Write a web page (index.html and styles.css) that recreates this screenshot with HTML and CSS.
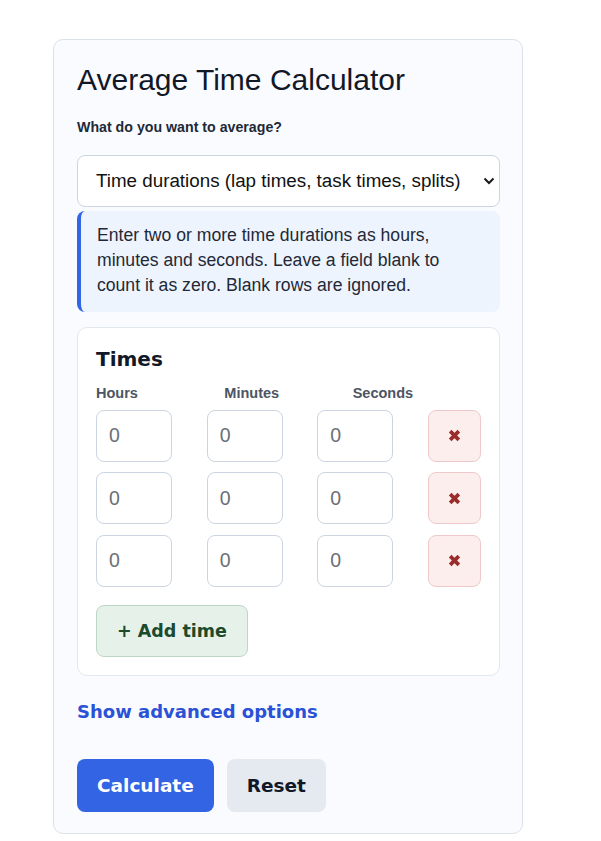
FILE: index.html
```html
<!DOCTYPE html>
<html lang="en">
<head>
    <meta charset="UTF-8">
    <meta name="viewport" content="width=device-width, initial-scale=1.0">
    <title>Average Time Calculator</title>
    <link rel="stylesheet" href="styles.css">
</head>
<body>
    <div class="page">
        <div class="calc">
            <h1>Average Time Calculator</h1>

            <label class="field-label" for="mode">What do you want to average?</label>
            <div class="select-wrap">
                <select id="mode">
                    <option>Time durations (lap times, task times, splits)</option>
                    <option>Clock times (times of day)</option>
                </select>
                <svg class="chevron" width="12" height="8" viewBox="0 0 12 8"><path d="M1.5 1.5 L6 6 L10.5 1.5" fill="none" stroke="#1a1a1a" stroke-width="2"/></svg>
            </div>

            <div class="info">
                Enter two or more time durations as hours, minutes and seconds. Leave a field blank to count it as zero. Blank rows are ignored.
            </div>

            <div class="times">
                <h2>Times</h2>
                <div class="col-labels">
                    <span>Hours</span>
                    <span>Minutes</span>
                    <span>Seconds</span>
                </div>
                <div class="rows" id="rows">
                    <div class="row">
                        <input type="number" placeholder="0">
                        <input type="number" placeholder="0">
                        <input type="number" placeholder="0">
                        <button type="button" class="remove" aria-label="Remove"><svg width="13" height="13" viewBox="0 0 12 12"><path d="M2 2 L10 10 M10 2 L2 10" stroke="#9b2c2c" stroke-width="3.4"/></svg></button>
                    </div>
                    <div class="row">
                        <input type="number" placeholder="0">
                        <input type="number" placeholder="0">
                        <input type="number" placeholder="0">
                        <button type="button" class="remove" aria-label="Remove"><svg width="13" height="13" viewBox="0 0 12 12"><path d="M2 2 L10 10 M10 2 L2 10" stroke="#9b2c2c" stroke-width="3.4"/></svg></button>
                    </div>
                    <div class="row">
                        <input type="number" placeholder="0">
                        <input type="number" placeholder="0">
                        <input type="number" placeholder="0">
                        <button type="button" class="remove" aria-label="Remove"><svg width="13" height="13" viewBox="0 0 12 12"><path d="M2 2 L10 10 M10 2 L2 10" stroke="#9b2c2c" stroke-width="3.4"/></svg></button>
                    </div>
                </div>
                <button type="button" class="add">+ Add time</button>
            </div>

            <button type="button" class="advanced">Show advanced options</button>

            <div class="actions">
                <button type="button" class="calculate">Calculate</button>
                <button type="button" class="reset">Reset</button>
            </div>
        </div>
    </div>
</body>
</html>
```

FILE: styles.css
```css
body {
    margin: 0;
    background: #ffffff;
    font-family: "Liberation Sans", Arial, sans-serif;
    color: #111827;
}
.page {
    padding: 39px 0 0 53px;
}
.calc {
    box-sizing: border-box;
    width: 470px;
    background: #f9fbff;
    border: 1px solid #dbe1ea;
    border-radius: 10px;
    padding: 22px 22px 21px 23px;
}
h1 {
    margin: 0;
    font-size: 30px;
    line-height: 36px;
    font-weight: 400;
    color: #111827;
}
.field-label {
    display: block;
    margin-top: 20px;
    font-size: 14.2px;
    line-height: 19.6px;
    font-weight: bold;
    color: #1f2937;
}
.select-wrap {
    position: relative;
    margin-top: 17px;
}
select {
    -webkit-appearance: none;
    appearance: none;
    box-sizing: border-box;
    width: 100%;
    height: 52px;
    padding: 0 24px 0 18px;
    border: 1px solid #cbd5e1;
    border-radius: 8px;
    background: #ffffff;
    font-family: "Liberation Sans", Arial, sans-serif;
    font-size: 18.8px;
    color: #111111;
}
.chevron {
    position: absolute;
    right: 5px;
    top: 22px;
    pointer-events: none;
}
.info {
    margin-top: 4px;
    background: #eef4fe;
    border-left: 4px solid #3366e6;
    border-radius: 8px;
    padding: 12px 16px 14px 16px;
    font-size: 17.6px;
    line-height: 25px;
    color: #1f2937;
}
.times {
    margin-top: 15px;
    background: #ffffff;
    border: 1px solid #e2e8f0;
    border-radius: 10px;
    padding: 20px 18px 18px 18px;
}
h2 {
    margin: 0;
    font-family: "DejaVu Sans", sans-serif;
    font-size: 20px;
    line-height: 23px;
    font-weight: bold;
    color: #111827;
}
.col-labels {
    display: grid;
    grid-template-columns: repeat(3, 1fr);
    margin-top: 13px;
    font-size: 14.5px;
    line-height: 18px;
    font-weight: bold;
    color: #4b5563;
}
.rows {
    display: flex;
    flex-direction: column;
    gap: 10.5px;
    margin-top: 8px;
}
.row {
    display: grid;
    grid-template-columns: repeat(3, 76px) 53px;
    justify-content: space-between;
    height: 52px;
}
.row input {
    box-sizing: border-box;
    width: 100%;
    height: 52px;
    padding: 0 10px 0 12px;
    border: 1px solid #cbd5e1;
    border-radius: 8px;
    background: #ffffff;
    font-family: "Liberation Sans", Arial, sans-serif;
    font-size: 19.5px;
    color: #111827;
    -moz-appearance: textfield;
}
.row input::-webkit-outer-spin-button,
.row input::-webkit-inner-spin-button {
    -webkit-appearance: none;
    margin: 0;
}
.row input::placeholder {
    color: #6b6f76;
}
.remove {
    display: flex;
    align-items: center;
    justify-content: center;
    height: 52px;
    padding: 0;
    background: #fdeeee;
    border: 1px solid #efc9c9;
    border-radius: 8px;
    cursor: pointer;
}
.add {
    margin-top: 18px;
    height: 52px;
    padding: 0 20px;
    background: #e6f1ea;
    border: 1px solid #bcd8c4;
    border-radius: 8px;
    font-family: "DejaVu Sans", sans-serif;
    font-size: 17.5px;
    font-weight: bold;
    color: #1c4a2c;
    cursor: pointer;
}
.advanced {
    display: block;
    margin-top: 25px;
    padding: 0;
    background: none;
    border: none;
    font-family: "DejaVu Sans", sans-serif;
    font-size: 18px;
    line-height: 21px;
    font-weight: bold;
    color: #2b52d6;
    cursor: pointer;
}
.actions {
    display: flex;
    gap: 13px;
    margin-top: 37px;
}
.actions button {
    height: 53px;
    padding: 0 20px;
    border: none;
    border-radius: 8px;
    font-family: "DejaVu Sans", sans-serif;
    font-size: 18.5px;
    font-weight: bold;
    cursor: pointer;
}
.calculate {
    background: #3364e4;
    color: #ffffff;
}
.reset {
    background: #e5e9f0;
    color: #111827;
}
```
